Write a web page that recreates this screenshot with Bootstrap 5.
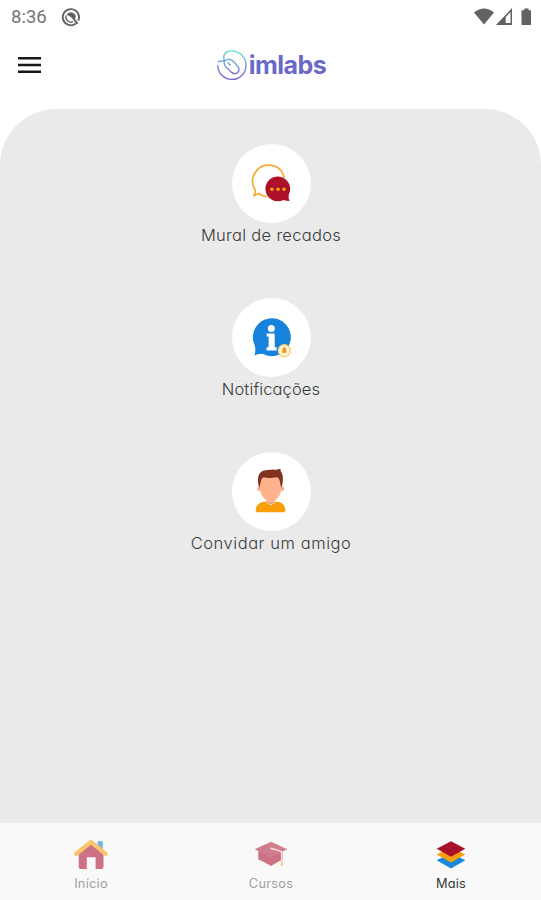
<!DOCTYPE html>
<html lang="pt-BR">
<head>
<meta charset="utf-8">
<meta name="viewport" content="width=device-width, initial-scale=1">
<title>imlabs</title>
<link href="https://cdn.jsdelivr.net/npm/bootstrap@5.3.0/dist/css/bootstrap.min.css" rel="stylesheet">
<style>
html, body { height: 100%; }
body { font-family: Inter, "Open Sans", sans-serif; font-feature-settings: "cv11"; color: #333; overflow: hidden; }
svg { display: block; flex: none; }
.status-bar { height: 34px; padding: 0 9px 0 11px; color: #666; }
.clock { font: 400 18.5px/34px Roboto, sans-serif; width: 50px; color: #757575; }
.app-header { height: 75px; display: grid; grid-template-columns: 1fr auto 1fr; padding: 0 16px 13px 17px; }
.menu-btn { width: 26px; height: 30px; }
.brand-name { font: 700 25px/30px Inter, sans-serif; letter-spacing: -.55px; color: #6b69c8; padding-left: 1px; }
.panel { background: #eaeaea; border-radius: 56px 56px 0 0; padding: 35px 0 0 1px; }
.tile { height: 154px; color: #3a3a3a; text-decoration: none; }
.tile-icon { width: 79px; height: 79px; background: #fff; }
.tile-label { font-size: 16.5px; line-height: 24px; font-weight: 350; }
.l-mural { letter-spacing: .3px; }
.l-notif { letter-spacing: .13px; }
.l-amigo { letter-spacing: .55px; }
.tab-bar { height: 77px; background: #f9f9f9; padding-left: 1px; }
.tab-item { padding-top: 15px; font-size: 12.8px; line-height: 18px; letter-spacing: .25px; color: #a2a2a2; text-decoration: none; }
.tab-item svg { margin-bottom: 5px; }
.tab-item.current { color: #363636; }
</style>
</head>
<body class="d-flex flex-column bg-white">
<div class="status-bar d-flex align-items-center">
  <span class="clock">8:36</span>
  <svg width="20" height="20" viewBox="0 0 20 20" fill="none" stroke="#626262"><path d="M14.8 16.6A8.1 8.1 0 1 1 17.2 13.6" stroke-width="1.9"/><path d="M12 14.6A5 5 0 0 1 5.2 8.4" stroke-width="1.3"/><path d="M5.6 7.6Q10.5 2.8 14.6 8.2Q15.2 10 14 11.8L17.5 16.5 15.6 17.2 10.2 10.2Z" fill="#626262" stroke="none"/></svg>
  <svg class="ms-auto" width="58" height="20" viewBox="474 6 58 20" fill="#626262"><path d="M474 11.5Q484 3.5 494 11.5L484 23.5Z"/><path fill-rule="evenodd" d="M512 7V24H496ZM510.5 11 505.7 16.2V22H510.5Z"/><path d="M524.3 7.5H528.6V9.2H531V24H521.5V9.2H524.3Z"/></svg>
</div>
<header class="app-header align-items-center">
  <button class="menu-btn btn p-0 border-0" aria-label="Menu"><svg width="25" height="30" viewBox="0 0 25 30" fill="#171717"><path d="M1 7H24V9.6H1ZM1 13.7H24V16.3H1ZM1 20.4H24V23H1Z"/></svg></button>
  <div class="d-flex align-items-center">
    <svg width="32" height="32" viewBox="0 0 32 32" fill="none" stroke="url(#g)" stroke-width="1.4" stroke-linecap="round"><defs><linearGradient id="g" x1="16" y1="1" x2="15" y2="31" gradientUnits="userSpaceOnUse"><stop stop-color="#64dfcf"/><stop offset=".5" stop-color="#7597d7"/><stop offset="1" stop-color="#7660c5"/></linearGradient></defs><path d="M8.5 11.5C7 8 8 4.5 11.5 2.6C20 -.2 30 6 30 16.2C30 24.5 23.5 30.4 15.8 30.4C8 30.4 1.8 24 1.8 16.5"/><path d="M2.2 12.5C4 12.4 6 12 9 11.8C12.5 9 15.5 10 18 13L22 17.6C25 21.8 20 27 15.7 23.4L10.5 18.6C8 16 7.5 13.7 9 11.8M12.2 14 14.3 16"/></svg>
    <span class="brand-name">imlabs</span>
  </div>
</header>
<main class="panel flex-grow-1">
  <a class="tile d-flex flex-column align-items-center">
    <span class="tile-icon rounded-circle"><svg width="79" height="79" viewBox="0 0 79 79"><path d="M35 52.5Q29.5 52 27 49.3L21.8 51.7Q24 49 23 45.5C19.5 40 20 34 22.5 29.5C26 23.5 32 20.5 38 21.2C46 22 51.5 27.5 52 34" fill="none" stroke="#f7aa35" stroke-width="1.7" stroke-linejoin="round"/><path d="M57.6 57Q54.4 57 51.5 55.9A12.4 12.4 0 1 1 56.8 50.6Q56 54.3 57.6 57Z" fill="#ac1129"/><g fill="#ff9f12"><circle cx="39.9" cy="45.2" r="1.8"/><circle cx="46" cy="45.2" r="1.8"/><circle cx="52" cy="45.2" r="1.8"/></g></svg></span>
    <span class="tile-label l-mural">Mural de recados</span>
  </a>
  <a class="tile d-flex flex-column align-items-center">
    <span class="tile-icon rounded-circle"><svg width="79" height="79" viewBox="0 0 79 79"><path d="M22.3 57.5Q24.2 53 22.7 47.5A19 19 0 1 1 30.5 55.8Q26 55.5 22.3 57.5Z" fill="#1682db"/><circle cx="39.3" cy="30.4" r="3.5" fill="#fff"/><path d="M34.6 35.4H42.7V49.2H44.6V52.6H34.6V49.2H36.6V38.5H34.6Z" fill="#fff"/><circle cx="52.3" cy="52.6" r="6" fill="#fff5d9" stroke="#f9c76a" stroke-width="1.3"/><path d="M49.5 54.6Q50.7 53 50.5 51.3Q50.8 49.3 52.3 49Q54 49.3 54.1 51.3Q54 53 55.1 54.6H53.3Q52.3 56.3 51.3 54.6Z" fill="#f49520"/></svg></span>
    <span class="tile-label l-notif">Notificações</span>
  </a>
  <a class="tile d-flex flex-column align-items-center">
    <span class="tile-icon rounded-circle"><svg width="79" height="79" viewBox="0 0 79 79"><path d="M23.7 58.5C24 52 28.5 49.7 34.5 49.5H43C49 49.8 53.2 52 53.4 58.5Q53.2 60.2 51.5 60.2H25.5Q23.8 60.2 23.7 58.5Z" fill="#fa9d0b"/><path d="M33.5 49.5Q38.7 56.5 44 49.5L42 47H35Z" fill="#e6e7ea"/><path d="M35 46H42.5V50.5Q38.7 53.5 35 50.5Z" fill="#e99a77"/><circle cx="27.5" cy="36.7" r="2.4" fill="#f7aa83"/><circle cx="49.7" cy="36.7" r="2.4" fill="#f7aa83"/><path d="M28 25H49.3V37Q49.3 43.5 42.5 49.2Q38.7 51.8 35 49.2Q28 43.5 28 37Z" fill="#ffb38d"/><path d="M27.7 35.5L26.6 33.5C25.3 26 26 20.3 31.5 18.7C37.5 17 43 18.8 48.4 16.8L48.8 19.5C51.5 22.5 51.2 28.5 50.2 33.5L49 35.5 47.8 29Q47 25.5 44 25.2Q37.5 26.8 31.5 25.2Q29.2 26.3 28.8 29.5Z" fill="#803122"/></svg></span>
    <span class="tile-label l-amigo">Convidar um amigo</span>
  </a>
</main>
<nav class="tab-bar row g-0">
  <a class="tab-item col d-flex flex-column align-items-center"><svg width="36" height="32" viewBox="0 0 36 32"><path d="M24.5 3.5Q27.2 2.5 29.8 3.5V13L24.5 9Z" fill="#72b7e8"/><path d="M5.7 14 18 5 30.5 14V29.3Q30.3 31 28.5 31H22.6V19.2H13.8V31H7.5Q5.8 31 5.7 29.3Z" fill="#cd7184"/><path d="M3.2 15.8 18 4 32.6 15.8" fill="none" stroke="#fcc56d" stroke-width="4.3" stroke-linecap="round" stroke-linejoin="round"/></svg><span>Início</span></a>
  <a class="tab-item col d-flex flex-column align-items-center"><svg width="36" height="32" viewBox="0 0 36 32"><path d="M5.3 10H29.7V21.5Q24 24 18 28Q12 24 5.3 21.5Z" fill="#cd7184"/><path d="M1.7 11.3 18 3.8 34.3 11.3 18 19.2Z" fill="#d27d8e"/><path d="M17.5 10.2Q26 12 28.7 14V24" fill="none" stroke="#f7dfe2" stroke-width="1.6"/><path d="M28.2 22.5H29.4L30 27.7H27.4Z" fill="#fac778"/></svg><span>Cursos</span></a>
  <a class="tab-item current col d-flex flex-column align-items-center"><svg width="36" height="32" viewBox="0 0 36 32"><path d="M3.7 22.3 18 15 32.3 22.3 18 30.5Z" fill="#1789df"/><path d="M3.7 16.6 18 9 32.3 16.6 18 24.4Z" fill="#fc9e12"/><path d="M3.7 10.7 18 3.2 32.3 10.7 18 18.8Z" fill="#a8112a"/></svg><span>Mais</span></a>
</nav>
<script src="https://cdn.jsdelivr.net/npm/bootstrap@5.3.0/dist/js/bootstrap.bundle.min.js"></script>
</body>
</html>
